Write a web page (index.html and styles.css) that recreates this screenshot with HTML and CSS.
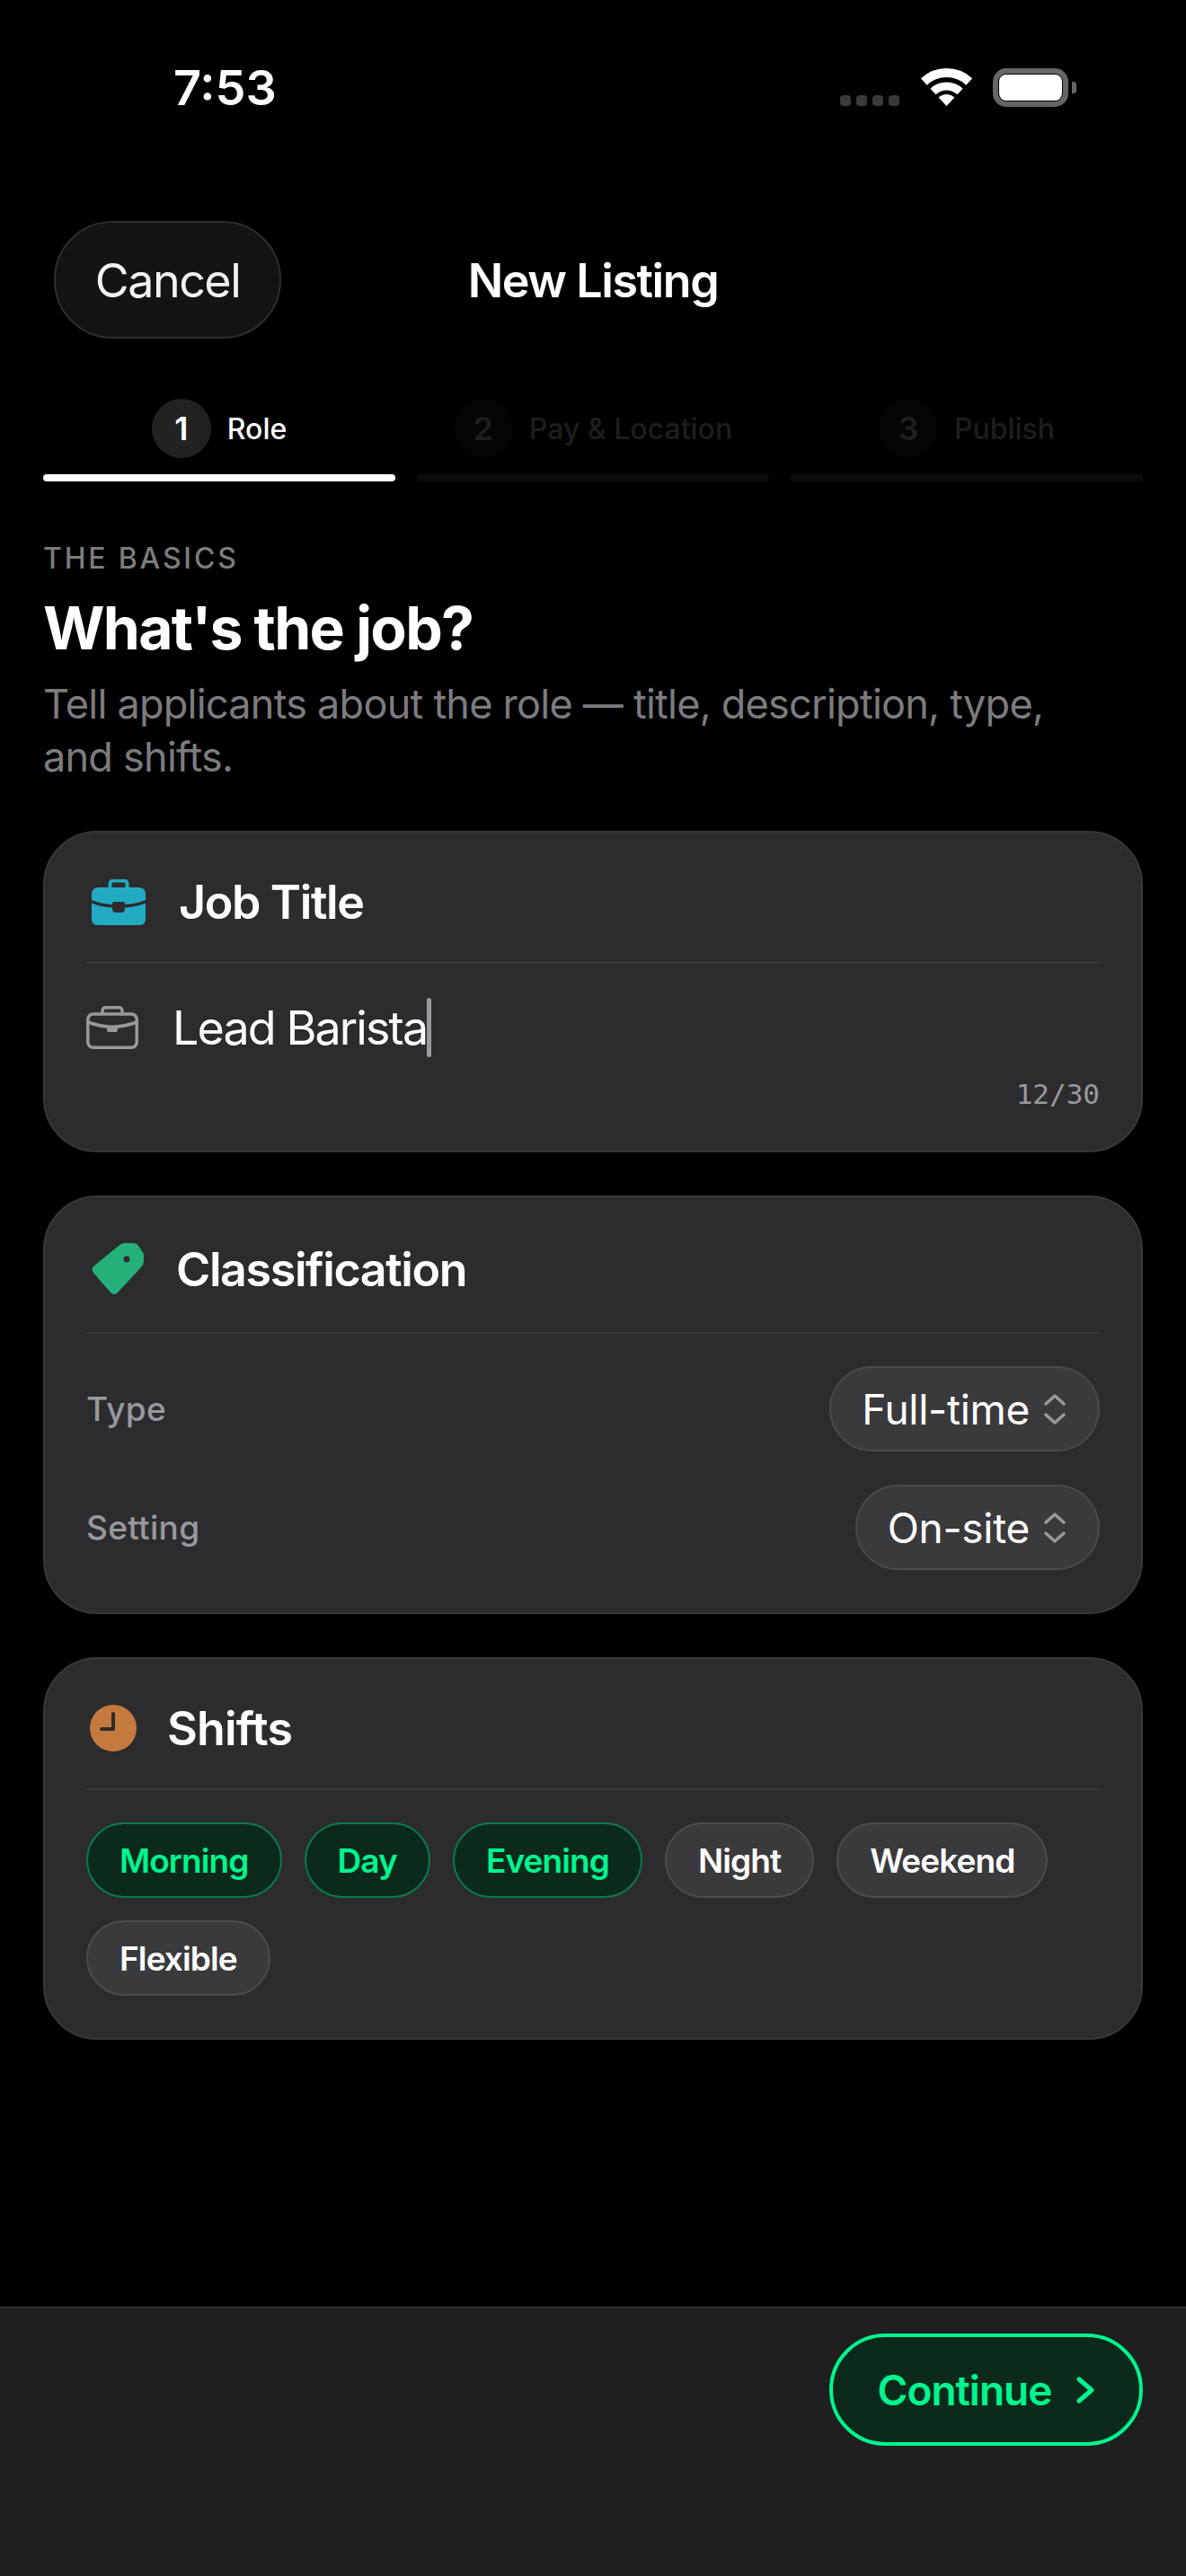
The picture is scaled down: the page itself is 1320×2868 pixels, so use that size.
FILE: index.html
```html
<!DOCTYPE html>
<html lang="en">
<head>
    <meta charset="UTF-8">
    <meta name="viewport" content="width=device-width, initial-scale=1.0">
    <title>New Listing</title>
    <link rel="stylesheet" href="styles.css">
</head>
<body>
    <div class="status">
        <span class="status-time">7:53</span>
        <div class="status-icons">
            <div class="signal"><i></i><i></i><i></i><i></i></div>
            <svg class="wifi" width="57" height="42" viewBox="0 0 57 42">
                <path d="M3.3 15A37 37 0 0 1 53.7 15" fill="none" stroke="#fff" stroke-width="10"/>
                <path d="M13.5 26A22 22 0 0 1 43.5 26" fill="none" stroke="#fff" stroke-width="9"/>
                <path d="M28.5 42L19.6 32.5A13 13 0 0 1 37.4 32.5Z" fill="#fff"/>
            </svg>
            <div class="battery"><div class="battery-fill"></div></div>
            <div class="battery-cap"></div>
        </div>
    </div>

    <div class="nav">
        <div class="nav-left"><button class="cancel">Cancel</button></div>
        <h1 class="nav-title">New Listing</h1>
    </div>

    <div class="steps">
        <div class="step active">
            <div class="step-head"><span class="step-num">1</span><span class="step-label">Role</span></div>
            <div class="step-bar"></div>
        </div>
        <div class="step">
            <div class="step-head"><span class="step-num">2</span><span class="step-label">Pay &amp; Location</span></div>
            <div class="step-bar"></div>
        </div>
        <div class="step">
            <div class="step-head"><span class="step-num">3</span><span class="step-label">Publish</span></div>
            <div class="step-bar"></div>
        </div>
    </div>

    <div class="content">
        <p class="kicker">THE BASICS</p>
        <h2 class="heading">What's the job?</h2>
        <p class="sub">Tell applicants about the role — title, description, type, and shifts.</p>

        <div class="card">
            <div class="card-head">
                <svg class="icon-job" width="60" height="51" viewBox="0 0 60 51">
                    <path d="M20.500 11V5a3.500 3.500 0 0 1 3.500-3.500h12a3.500 3.500 0 0 1 3.500 3.500v6" fill="none" stroke="#22aac2" stroke-width="4"/>
                    <path d="M7 9H53a7 7 0 0 1 7 7v7c-7 3-15 4.500-23 5v-1a2 2 0 0 0-2-2H25a2 2 0 0 0-2 2v1c-8-.5-16-2-23-5v-7a7 7 0 0 1 7-7z" fill="#22aac2"/>
                    <path d="M0 26.500c7 3 15 4.500 23 5v1.500a4 4 0 0 0 4 4h6a4 4 0 0 0 4-4v-1.500c8-.5 16-2 23-5V45a6 6 0 0 1-6 6H6a6 6 0 0 1-6-6z" fill="#22aac2"/>
                </svg>
                <h3 class="card-title">Job Title</h3>
            </div>
            <div class="input-row">
                <svg class="icon-input" width="58" height="48" viewBox="0 0 58 48" fill="none" stroke="#98989d" stroke-width="3.500">
                    <rect x="1.750" y="9" width="54.500" height="37.250" rx="6"/>
                    <path d="M2 18C20 25 38 25 56 18"/>
                    <path d="M18 9V5a3.200 3.200 0 0 1 3.200-3.200h15.600A3.200 3.200 0 0 1 40 5v4"/>
                    <rect x="23" y="23" width="12" height="6" rx="2" fill="#98989d" stroke="none"/>
                </svg>
                <span class="input-text">Lead Barista</span><span class="caret"></span>
            </div>
            <div class="counter">12/30</div>
        </div>

        <div class="card">
            <div class="card-head card-head-tall">
                <svg class="icon-tag" width="58" height="58" viewBox="0 0 58 58">
                    <path d="M30 3Q33 0 37 0H46Q50 0 52 3L56 9Q58 11 58 15V20Q58 24 55 27L29 55Q25 59 21 55L2 33Q-1 29 2 26Z" fill="#25b07a"/>
                    <circle cx="39" cy="18" r="3.500" fill="#2c2c2e"/>
                </svg>
                <h3 class="card-title">Classification</h3>
            </div>
            <div class="field-rows">
                <div class="field">
                    <span class="field-label">Type</span>
                    <div class="select">
                        <span>Full-time</span>
                        <svg width="24" height="34" viewBox="0 0 24 34" fill="none" stroke="#98989d" stroke-width="3.500" stroke-linecap="round" stroke-linejoin="round"><path d="M2 11L12 2L22 11"/><path d="M2 23L12 32L22 23"/></svg>
                    </div>
                </div>
                <div class="field">
                    <span class="field-label">Setting</span>
                    <div class="select">
                        <span>On-site</span>
                        <svg width="24" height="34" viewBox="0 0 24 34" fill="none" stroke="#98989d" stroke-width="3.500" stroke-linecap="round" stroke-linejoin="round"><path d="M2 11L12 2L22 11"/><path d="M2 23L12 32L22 23"/></svg>
                    </div>
                </div>
            </div>
        </div>

        <div class="card">
            <div class="card-head card-head-shifts">
                <svg class="icon-clock" width="52" height="52" viewBox="0 0 52 52">
                    <circle cx="26" cy="26" r="26" fill="#c47a3d"/>
                    <path d="M26 10V27H13" fill="none" stroke="#2c2c2e" stroke-width="4" stroke-linecap="round" stroke-linejoin="round"/>
                </svg>
                <h3 class="card-title">Shifts</h3>
            </div>
            <div class="chips">
                <span class="chip chip-on">Morning</span>
                <span class="chip chip-on">Day</span>
                <span class="chip chip-on">Evening</span>
                <span class="chip">Night</span>
                <span class="chip">Weekend</span>
                <span class="chip">Flexible</span>
            </div>
        </div>
    </div>

    <div class="footer">
        <button class="continue">
            Continue
            <svg width="20" height="30" viewBox="0 0 20 30" fill="none" stroke="#00f58f" stroke-width="5" stroke-linecap="round" stroke-linejoin="round"><path d="M3 3L17 15L3 27"/></svg>
        </button>
    </div>
</body>
</html>
```

FILE: styles.css
```css
* {
    box-sizing: border-box;
}
body {
    margin: 0;
    width: 1320px;
    height: 2868px;
    display: flex;
    flex-direction: column;
    background-color: #000;
    color: #fff;
    font-family: Inter, "Liberation Sans", sans-serif;
}
h1, h2, h3, p {
    margin: 0;
}
button {
    font-family: inherit;
    cursor: pointer;
}

/* status bar */
.status {
    height: 196px;
    padding: 0 122px 2px 193px;
    display: flex;
    align-items: center;
    justify-content: space-between;
}
.status-time {
    font-size: 54px;
    font-weight: 600;
}
.status-icons {
    display: flex;
    align-items: flex-end;
    height: 43px;
}
.signal {
    display: flex;
    gap: 6px;
    margin-right: 24px;
    padding-bottom: 1px;
}
.signal i {
    width: 12px;
    height: 12px;
    border-radius: 4px;
    background-color: #3a3a3c;
}
.wifi {
    margin-right: 23px;
    margin-bottom: 1px;
}
.battery {
    width: 84px;
    height: 43px;
    padding: 1px;
    border: 6px solid #666;
    border-radius: 15px;
}
.battery-fill {
    height: 100%;
    border-radius: 8px;
    background-color: #fff;
}
.battery-cap {
    width: 5px;
    height: 13px;
    margin: 0 0 15px 4px;
    border-radius: 0 3px 3px 0;
    background-color: #666;
}

/* nav */
.nav {
    height: 131px;
    margin-top: 50px;
    padding: 0 60px;
    display: grid;
    grid-template-columns: 1fr auto 1fr;
    align-items: center;
}
.cancel {
    width: 253px;
    height: 131px;
    padding: 2px 0 0;
    font-size: 52px;
    letter-spacing: -1.5px;
    color: #f2f2f2;
    background-color: #141414;
    border: 2px solid #2e2e2e;
    border-radius: 65px;
}
.nav-title {
    margin-top: 2px;
    font-size: 52px;
    font-weight: 600;
    letter-spacing: -1.4px;
    white-space: nowrap;
}

/* steps */
.steps {
    margin-top: 67px;
    padding: 0 48px;
    display: grid;
    grid-template-columns: repeat(3, 1fr);
    gap: 24px;
}
.step-head {
    height: 66px;
    display: flex;
    align-items: center;
    justify-content: center;
    gap: 18px;
    color: #1e1e1e;
}
.step-num {
    width: 66px;
    height: 66px;
    display: flex;
    align-items: center;
    justify-content: center;
    border-radius: 50%;
    font-size: 36px;
    font-weight: 600;
    background-color: #040404;
}
.step-label {
    font-size: 32px;
    font-weight: 500;
}
.step-bar {
    height: 8px;
    margin-top: 18px;
    border-radius: 4px;
    background-color: #0c0c0c;
}
.step.active .step-head {
    color: #fff;
}
.step.active .step-num {
    background-color: #222;
}
.step.active .step-bar {
    background-color: #fff;
}

/* main column */
.content {
    flex: 1;
    padding: 0 48px;
}
.kicker {
    margin-top: 66px;
    font-size: 32px;
    line-height: 40px;
    font-weight: 500;
    letter-spacing: 2.8px;
    color: #7c7c7e;
}
.heading {
    margin-top: 16px;
    font-size: 66px;
    line-height: 82px;
    font-weight: 700;
    letter-spacing: -1.7px;
}
.sub {
    margin-top: 14px;
    padding-right: 40px;
    font-size: 45px;
    line-height: 59px;
    letter-spacing: -0.75px;
    color: #7c7c7e;
}
.card {
    margin-top: 48px;
    padding: 0 46px;
    background-color: #2c2c2e;
    border: 2px solid #38383a;
    border-radius: 60px;
}
.sub + .card {
    margin-top: 53px;
}
.card-head {
    height: 146px;
    padding-top: 10px;
    display: flex;
    align-items: center;
    gap: 37px;
    border-bottom: 2px solid #3a3a3c;
}
.card-head-tall {
    height: 152px;
    gap: 36px;
}
.card-head-shifts {
    gap: 34px;
}
.icon-job,
.icon-tag {
    margin-left: 6px;
}
.icon-clock {
    margin-left: 4px;
}
.card-title {
    font-size: 52px;
    font-weight: 600;
    letter-spacing: -1.4px;
}
.card-head-shifts .card-title {
    letter-spacing: -0.8px;
}
.input-row {
    margin-top: 36px;
    height: 70px;
    display: flex;
    align-items: center;
}
.icon-input {
    margin-right: 38px;
}
.input-text {
    font-size: 52px;
    letter-spacing: -1.9px;
}
.caret {
    width: 5px;
    height: 66px;
    border-radius: 3px;
    background-color: #98989d;
}
.counter {
    margin-top: 20px;
    text-align: right;
    font-family: "DejaVu Sans Mono", monospace;
    font-size: 31px;
    line-height: 38px;
    color: #98989d;
    padding-bottom: 44px;
}
.field-rows {
    padding: 36px 0 47px;
    display: flex;
    flex-direction: column;
    gap: 37px;
}
.field {
    display: flex;
    align-items: center;
    justify-content: space-between;
}
.field-label {
    font-size: 37px;
    font-weight: 500;
    letter-spacing: 0.3px;
    color: #98989d;
}
.select {
    height: 95px;
    padding: 0 36px 0 34px;
    display: flex;
    align-items: center;
    gap: 16px;
    font-size: 46px;
    letter-spacing: -0.3px;
    background-color: #3a3a3c;
    border: 2px solid #4a4a4c;
    border-radius: 48px;
}
.chips {
    padding: 36px 0 47px;
    display: flex;
    flex-wrap: wrap;
    gap: 25px;
}
.chip {
    height: 84px;
    padding: 0 35px;
    display: flex;
    align-items: center;
    font-size: 37px;
    font-weight: 600;
    letter-spacing: -0.9px;
    background-color: #3a3a3c;
    border: 2px solid #4c4c4e;
    border-radius: 42px;
}
.chip-on {
    color: #00f58f;
    background-color: #0c2a1c;
    border-color: #0a7a4c;
}

/* footer */
.footer {
    height: 300px;
    padding: 28px 48px 0;
    display: flex;
    justify-content: flex-end;
    align-items: flex-start;
    background-color: #1f1f1f;
    border-top: 2px solid #2e2e2e;
}
.continue {
    width: 349px;
    height: 125px;
    display: flex;
    align-items: center;
    justify-content: center;
    gap: 28px;
    font-size: 46px;
    font-weight: 600;
    letter-spacing: -1px;
    color: #00f58f;
    background-color: #0c2a1c;
    border: 4px solid #00f58f;
    border-radius: 63px;
}
```
